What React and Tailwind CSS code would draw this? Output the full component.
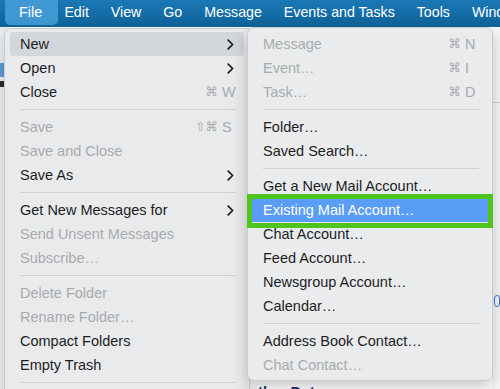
import React from "react";

const F = { fontFamily: '"Liberation Sans", Arial, sans-serif' };
const SYM = { fontFamily: '"DejaVu Sans", sans-serif' };

function Chevron() {
  return (
    <svg width="7" height="11" viewBox="0 0 7 11" className="shrink-0">
      <path d="M1.2 1.2 L5.6 5.5 L1.2 9.8" fill="none" stroke="#1c1c1c" strokeWidth="1.7" strokeLinecap="round" strokeLinejoin="round" />
    </svg>
  );
}

function Item({ label, disabled, mod, k, sub, hl }) {
  return (
    <div
      className={
        "mx-[5px] h-[24px] flex items-center pl-[10px] rounded-[4px] " +
        (hl ? "bg-[#d3d7db]" : "")
      }
    >
      <span className={"flex-1 whitespace-nowrap text-[14.5px] leading-none " + (disabled ? "text-[#a8abae]" : "text-[#1d1d1f]")}>
        {label}
      </span>
      {k && (
        <span className="flex items-center text-[#a8abae] text-[14.5px] leading-none">
          <span style={SYM} className="text-[12.5px] mr-[4px]">{mod}</span>
          <span className="w-[22px]">{k}</span>
        </span>
      )}
      {sub && (
        <span className="pr-[10px]">
          <Chevron />
        </span>
      )}
    </div>
  );
}

function Sep() {
  return <div className="h-[11px] flex items-center pl-[15px] pr-[13px]"><div className="h-px w-full bg-[#cfd2d5]" /></div>;
}

export default function App() {
  return (
    <div style={F} className="w-[500px] h-[389px] overflow-hidden bg-white relative">
      {/* menubar */}
      <div className="h-[27px] bg-gradient-to-b from-[#1a78b6] to-[#0f6399] flex items-start text-white text-[14.5px] pl-[5px] whitespace-nowrap overflow-hidden">
        <div className="h-[25px] pl-[14px] pr-[16px] flex items-center bg-[#3f98d2] rounded-b-[5px]">File</div>
        <div className="flex items-center h-[25px] gap-[22px] ml-[6px] whitespace-nowrap text-[14.2px]">
          <span>Edit</span>
          <span>View</span>
          <span>Go</span>
          <span>Message</span>
          <span>Events and Tasks</span>
          <span>Tools</span>
          <span>Window</span>
        </div>
      </div>

      {/* background app content */}
      <div className="flex h-[362px]">
        <div className="w-[8px] bg-[#eceef0] flex flex-col pt-[36px]">
          <div className="w-[4px] h-[14px] bg-[#5b9bd8]" />
          <div className="w-[4px] h-[6px] bg-[#2a2a2a] mt-[4px]" />
        </div>
        <div className="flex-1 flex flex-col justify-end">
          <div className="pl-[230px] text-[15px] font-bold text-[#1b2f6e] leading-none h-[8px] overflow-hidden pt-[3px] whitespace-nowrap">Gather Data</div>
        </div>
        <div className="w-[8px] bg-[#f5f6f7] flex flex-col pt-[75px]">
          <div className="h-px bg-[#cfd2d5]" />
          <div className="h-[12px] w-[6px] ml-[2px] mt-[192px] border border-[#3a7bd5] rounded-[3px]" />
        </div>
      </div>

      {/* menus overlay */}
      <div className="absolute left-[4px] top-[28px] flex items-start">
        <div className="w-[246px] h-[380px] bg-[#e8eaec] border border-[#c9cbce] rounded-tl-[7px] pt-[3px] shadow-[0_4px_14px_rgba(0,0,0,0.18)]">
          <Item label="New" sub hl />
          <Item label="Open" sub />
          <Item label="Close" mod="⌘" k="W" />
          <Sep />
          <Item label="Save" disabled mod="⇧⌘" k="S" />
          <Item label="Save and Close" disabled />
          <Item label="Save As" sub />
          <Sep />
          <Item label="Get New Messages for" sub />
          <Item label="Send Unsent Messages" disabled />
          <Item label="Subscribe…" disabled />
          <Sep />
          <Item label="Delete Folder" disabled />
          <Item label="Rename Folder…" disabled />
          <Item label="Compact Folders" />
          <Item label="Empty Trash" />
          <Sep />
        </div>
        <div className="relative -ml-[3px] -mt-[1px] w-[246px] bg-[#e9ebed] border border-[#c9cbce] rounded-[7px] pt-[4px] pb-[3px] shadow-[0_6px_16px_rgba(0,0,0,0.22)]">
          <Item label="Message" disabled mod="⌘" k="N" />
          <Item label="Event…" disabled mod="⌘" k="I" />
          <Item label="Task…" disabled mod="⌘" k="D" />
          <Sep />
          <Item label="Folder…" />
          <Item label="Saved Search…" />
          <Sep />
          <Item label="Get a New Mail Account…" />
          <div className="mx-[5px] h-[24px] flex items-center pl-[10px] pt-[1px]">
            <div className="absolute left-[-1px] right-[-1px] h-[34px] border-[5px] border-[#4fc41c]" />
            <div className="absolute left-[4px] right-[4px] h-[23px] bg-[#5a9df7]" />
            <span className="relative text-[14.5px] leading-none text-white whitespace-nowrap">Existing Mail Account…</span>
          </div>
          <Item label="Chat Account…" />
          <Item label="Feed Account…" />
          <Item label="Newsgroup Account…" />
          <Item label="Calendar…" />
          <Sep />
          <Item label="Address Book Contact…" />
          <Item label="Chat Contact…" disabled />
        </div>
      </div>
    </div>
  );
}
